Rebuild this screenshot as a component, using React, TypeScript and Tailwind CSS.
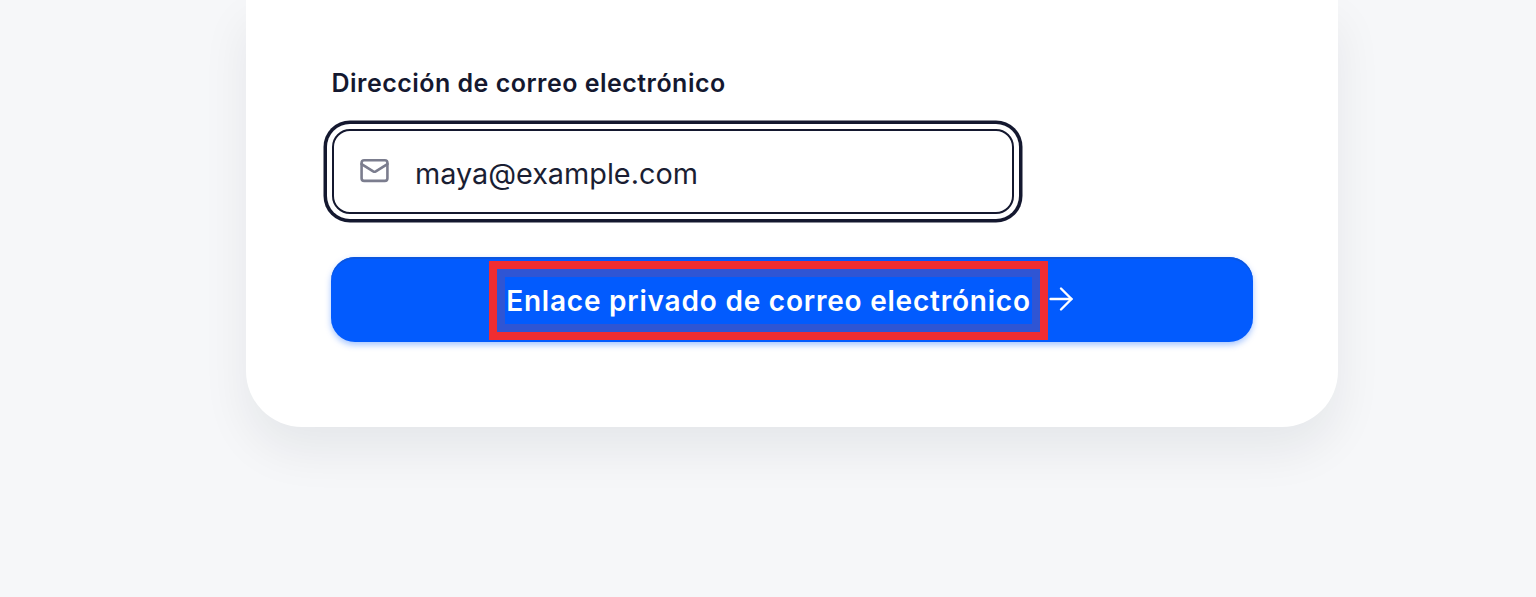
import React from 'react';
import { Mail, ArrowRight } from 'lucide-react';

export default function App() {
  return (
    <div className="h-[597px] overflow-hidden bg-[#f6f7f9] pl-[246px] font-['Inter',sans-serif]">
      <div className="h-[427px] w-[1092px] rounded-b-[56px] bg-white pl-[85px] pr-[85px] pt-[66px] shadow-[0_24px_48px_rgba(17,24,39,0.07)]">
        <label className="ml-[0.5px] block text-[25px] font-semibold leading-[34px] tracking-[0.48px] text-[#14182f]">
          Dirección de correo electrónico
        </label>

        {/* Focused input */}
        <div className="mt-[29px] ml-px flex h-[85px] w-[682px] items-center rounded-[18px] border-2 border-[#14182f] bg-white pl-[25px] shadow-[0_0_0_5px_#ffffff,0_0_0_8.5px_#14182f]">
          <Mail className="-mt-[2px] h-[31px] w-[31px] text-[#7b7d8e]" strokeWidth={2} />
          <span className="mt-[4px] ml-[25px] text-[28.8px] leading-[40px] text-[#1a1e33]">maya@example.com</span>
        </div>

        {/* Submit button */}
        <div className="mt-[43px] flex h-[85px] w-[922px] items-center justify-center rounded-[24px] bg-[#025bfe] pr-[16px] shadow-[inset_0_2px_0_#0b56e0,0_3px_6px_rgba(2,91,254,0.35)]">
          <span className="mt-px border-[8px] border-[#f02d31] bg-[#2f55d4] p-[8px] leading-none">
            <span className="block bg-[#025bfe] px-px pt-[2px] pb-[1px] text-[28px] font-semibold leading-[44px] tracking-[0.78px] text-white">
              Enlace privado de correo electrónico
            </span>
          </span>
          <ArrowRight className="-ml-[5px] -mt-0.5 h-[36px] w-[36px] text-white" strokeWidth={1.6} />
        </div>
      </div>
    </div>
  );
}
